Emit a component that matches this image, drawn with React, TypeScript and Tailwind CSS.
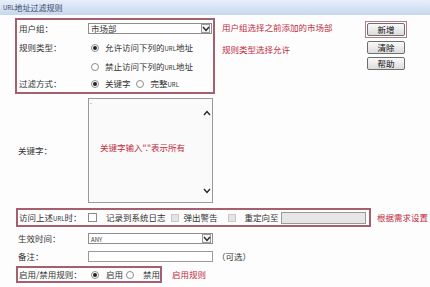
import React from "react";

const Radio = ({ checked }: { checked?: boolean }) => (
  <span className="w-[8px] h-[8px] rounded-full border border-[#8d8d8d] bg-white flex items-center justify-center shrink-0">
    {checked && <span className="w-[4px] h-[4px] rounded-full bg-[#222]" />}
  </span>
);

const Chevron = ({ up }: { up?: boolean }) => (
  <svg width="8" height="6" viewBox="0 0 8 6" className="block shrink-0">
    <path
      d={up ? "M1 5 L4 1.5 L7 5" : "M1 1 L4 4.5 L7 1"}
      fill="none"
      stroke="#2a2a2a"
      strokeWidth="1.4"
    />
  </svg>
);

const Select = ({ children, w }: { children: React.ReactNode; w: string }) => (
  <div className={`${w} h-[11px] border border-[#8e8e8e] bg-white flex items-center`}>
    <span className="flex-1 pl-[2px] leading-none">{children}</span>
    <span className="w-[9px] h-[9px] mr-[1px] border border-[#9a9a9a] bg-[#f4f4f4] flex items-center justify-center">
      <Chevron />
    </span>
  </div>
);

const Small = ({ children }: { children: React.ReactNode }) => (
  <span className="text-[6px]">{children}</span>
);

const Btn = ({ children }: { children: React.ReactNode }) => (
  <div className="w-[38px] h-[13px] border border-[#6f6f6f] rounded-[2px] bg-gradient-to-b from-[#fafafa] to-[#dcdcdc] flex items-center justify-center text-[#111] leading-none">
    {children}
  </div>
);

export default function App() {
  return (
    <div className="w-[430px] h-[287px] overflow-hidden bg-[#fdfdfd] text-[#333] text-[8.5px] leading-none font-['Noto_Sans_CJK_SC','Noto_Sans',sans-serif]">
      {/* header */}
      <div className="h-[15px] bg-gradient-to-b from-[#e8eff9] to-[#c6d7ef] flex items-center pl-[3px] text-[8px] text-[#3b4a68]">
        <Small>URL</Small>地址过滤规则
      </div>

      {/* top section */}
      <div className="flex mt-[3px]">
        <div className="ml-[15px] w-[200px] h-[76px] border-2 border-[#a5606f] flex flex-col">
          <div className="h-[17px] flex items-center">
            <span className="w-[71px] pl-[2px]">用户组：</span>
            <Select w="w-[124px]">市场部</Select>
          </div>
          <div className="h-[21px] flex items-center">
            <span className="w-[71px] pl-[2px]">规则类型：</span>
            <span className="ml-[3px]"><Radio checked /></span>
            <span className="ml-[6px]">允许访问下列的<Small>URL</Small>地址</span>
          </div>
          <div className="h-[17px] flex items-center">
            <span className="w-[71px]" />
            <span className="ml-[3px]"><Radio /></span>
            <span className="ml-[6px]">禁止访问下列的<Small>URL</Small>地址</span>
          </div>
          <div className="h-[17px] flex items-center">
            <span className="w-[71px] pl-[2px]">过滤方式：</span>
            <span className="ml-[3px]"><Radio checked /></span>
            <span className="ml-[6px]">关键字</span>
            <span className="ml-[5px]"><Radio /></span>
            <span className="ml-[7px]">完整<Small>URL</Small></span>
          </div>
        </div>

        <div className="ml-[7px] w-[143px] flex flex-col text-[#c02a3e]">
          <div className="h-[18px] flex items-center">用户组选择之前添加的市场部</div>
          <div className="h-[26px] flex items-center">规则类型选择允许</div>
        </div>

        <div className="flex flex-col items-start pt-[3px]">
          <div className="border border-[#b07a88] p-[1px]">
            <Btn>新增</Btn>
          </div>
          <div className="ml-[2px] mt-[3px]"><Btn>清除</Btn></div>
          <div className="ml-[2px] mt-[3px]"><Btn>帮助</Btn></div>
        </div>
      </div>

      {/* keyword */}
      <div className="flex items-center mt-[4px]">
        <span className="w-[88px] pl-[18px]">关键字：</span>
        <div className="w-[125px] h-[105px] border border-[#9a9a9a] bg-[#fafafa] flex">
          <div className="flex-1 flex flex-col">
            <span className="pl-[1px] text-[6px] leading-none">.</span>
            <span className="pl-[11px] mt-[38px] text-[#c02a3e]">关键字输入"."表示所有</span>
          </div>
          <div className="w-[11px] flex flex-col justify-between items-center pt-[11px] pb-[8px]">
            <Chevron up />
            <Chevron />
          </div>
        </div>
      </div>

      {/* action box */}
      <div className="flex items-center mt-[5px]">
        <div className="ml-[16px] w-[355px] h-[19px] border-2 border-[#a5606f] flex items-center">
          <span className="w-[70px] pl-[1px]">访问上述<Small>URL</Small>时：</span>
          <span className="w-[9px] h-[9px] border border-[#8a8a8a] bg-white" />
          <span className="ml-[9px]">记录到系统日志</span>
          <span className="ml-[5px] w-[8px] h-[8px] border border-[#c8c8c8] bg-[#e4e4e4]" />
          <span className="ml-[5px]">弹出警告</span>
          <span className="ml-[10px] w-[8px] h-[8px] border border-[#c8c8c8] bg-[#e4e4e4]" />
          <span className="ml-[9px]">重定向至</span>
          <span className="ml-[2px] w-[85px] h-[12px] border border-[#9a9a9a] bg-[#e6e6e6]" />
        </div>
        <span className="ml-[6px] text-[#c02a3e]">根据需求设置</span>
      </div>

      {/* time */}
      <div className="flex items-center mt-[6px] h-[11px]">
        <span className="w-[88px] pl-[18px]">生效时间：</span>
        <Select w="w-[125px]"><Small>ANY</Small></Select>
      </div>

      {/* note */}
      <div className="flex items-center mt-[7px] h-[11px]">
        <span className="w-[88px] pl-[18px]">备注：</span>
        <span className="w-[125px] h-[11px] border border-[#9a9a9a] bg-white" />
        <span className="ml-[4px]">（可选）</span>
      </div>

      {/* enable box */}
      <div className="flex items-center mt-[4px]">
        <div className="ml-[16px] w-[146px] h-[17px] border-2 border-[#a5606f] flex items-center">
          <span className="w-[70px] pl-[1px]">启用/禁用规则：</span>
          <span className="ml-[3px]"><Radio checked /></span>
          <span className="ml-[7px]">启用</span>
          <span className="ml-[3px]"><Radio /></span>
          <span className="ml-[9px]">禁用</span>
        </div>
        <span className="ml-[10px] text-[#c02a3e]">启用规则</span>
      </div>
    </div>
  );
}
